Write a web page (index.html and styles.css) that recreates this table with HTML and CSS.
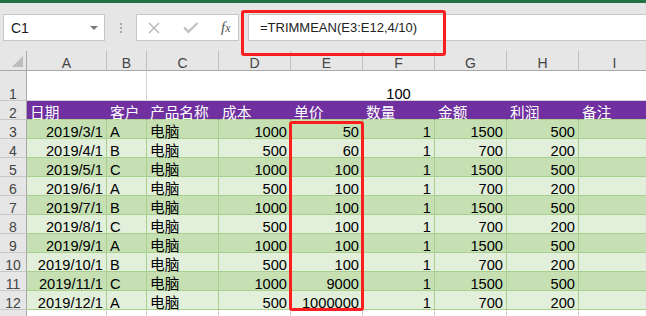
FILE: index.html
```html
<!DOCTYPE html>
<html>
<head>
<meta charset="utf-8">
<link rel="stylesheet" href="styles.css">
</head>
<body>
<div class="app">
  <div class="title-strip"></div>
  <div class="formula-bar">
    <div class="name-box"><span>C1</span><span class="caret"></span></div>
    <div class="grip"><i></i><i></i><i></i></div>
    <div class="fx-buttons">
      <svg class="ic-cancel" width="12" height="12" viewBox="0 0 12 12"><path d="M1 1L11 11M11 1L1 11" stroke="#b4b4b4" stroke-width="1.3" fill="none"/></svg>
      <svg class="ic-enter" width="16" height="12" viewBox="0 0 16 12"><path d="M1.2 5.6L5.4 9.8L14.6 1" stroke="#c2c2c2" stroke-width="2.4" fill="none"/></svg>
      <span class="fx">f<span class="fx-x">x</span></span>
    </div>
    <div class="formula-input">=TRIMMEAN(E3:E12,4/10)</div>
  </div>

  <div class="sheet">
    <div class="c ch corner"><span class="tri"></span></div>
    <div class="c ch">A</div><div class="c ch">B</div><div class="c ch">C</div><div class="c ch">D</div><div class="c ch">E</div><div class="c ch">F</div><div class="c ch">G</div><div class="c ch">H</div><div class="c ch">I</div>

    <div class="c rh">1</div>
    <div class="c span2"></div>
    <div class="c merged">100</div>

    <div class="c rh">2</div>
    <div class="c hd">日期</div><div class="c hd">客户</div><div class="c hd">产品名称</div><div class="c hd">成本</div><div class="c hd">单价</div><div class="c hd">数量</div><div class="c hd">金额</div><div class="c hd">利润</div><div class="c hd">备注</div>

    <div class="c rh">3</div>
    <div class="c dk r">2019/3/1</div><div class="c dk">A</div><div class="c dk">电脑</div><div class="c dk r">1000</div><div class="c dk r">50</div><div class="c dk r">1</div><div class="c dk r">1500</div><div class="c dk r">500</div><div class="c dk"></div>

    <div class="c rh">4</div>
    <div class="c lt r">2019/4/1</div><div class="c lt">B</div><div class="c lt">电脑</div><div class="c lt r">500</div><div class="c lt r">60</div><div class="c lt r">1</div><div class="c lt r">700</div><div class="c lt r">200</div><div class="c lt"></div>

    <div class="c rh">5</div>
    <div class="c dk r">2019/5/1</div><div class="c dk">C</div><div class="c dk">电脑</div><div class="c dk r">1000</div><div class="c dk r">100</div><div class="c dk r">1</div><div class="c dk r">1500</div><div class="c dk r">500</div><div class="c dk"></div>

    <div class="c rh">6</div>
    <div class="c lt r">2019/6/1</div><div class="c lt">A</div><div class="c lt">电脑</div><div class="c lt r">500</div><div class="c lt r">100</div><div class="c lt r">1</div><div class="c lt r">700</div><div class="c lt r">200</div><div class="c lt"></div>

    <div class="c rh">7</div>
    <div class="c dk r">2019/7/1</div><div class="c dk">B</div><div class="c dk">电脑</div><div class="c dk r">1000</div><div class="c dk r">100</div><div class="c dk r">1</div><div class="c dk r">1500</div><div class="c dk r">500</div><div class="c dk"></div>

    <div class="c rh">8</div>
    <div class="c lt r">2019/8/1</div><div class="c lt">C</div><div class="c lt">电脑</div><div class="c lt r">500</div><div class="c lt r">100</div><div class="c lt r">1</div><div class="c lt r">700</div><div class="c lt r">200</div><div class="c lt"></div>

    <div class="c rh">9</div>
    <div class="c dk r">2019/9/1</div><div class="c dk">A</div><div class="c dk">电脑</div><div class="c dk r">1000</div><div class="c dk r">100</div><div class="c dk r">1</div><div class="c dk r">1500</div><div class="c dk r">500</div><div class="c dk"></div>

    <div class="c rh">10</div>
    <div class="c lt r">2019/10/1</div><div class="c lt">B</div><div class="c lt">电脑</div><div class="c lt r">500</div><div class="c lt r">100</div><div class="c lt r">1</div><div class="c lt r">700</div><div class="c lt r">200</div><div class="c lt"></div>

    <div class="c rh">11</div>
    <div class="c dk r">2019/11/1</div><div class="c dk">C</div><div class="c dk">电脑</div><div class="c dk r">1000</div><div class="c dk r">9000</div><div class="c dk r">1</div><div class="c dk r">1500</div><div class="c dk r">500</div><div class="c dk"></div>

    <div class="c rh">12</div>
    <div class="c lt r">2019/12/1</div><div class="c lt">A</div><div class="c lt">电脑</div><div class="c lt r">500</div><div class="c lt r">1000000</div><div class="c lt r">1</div><div class="c lt r">700</div><div class="c lt r">200</div><div class="c lt"></div>

    <div class="c rh">13</div>
    <div class="c"></div><div class="c"></div><div class="c"></div><div class="c"></div><div class="c"></div><div class="c"></div><div class="c"></div><div class="c"></div><div class="c"></div>
  </div>

  <div class="callout callout-formula"></div>
  <div class="callout callout-range"></div>
</div>
</body>
</html>
```

FILE: styles.css
```css
* { box-sizing: border-box; }
html, body { margin: 0; padding: 0; }
body {
  width: 646px;
  height: 316px;
  overflow: hidden;
  background: #e6e6e6;
  font-family: "Liberation Sans", "Noto Sans CJK SC", sans-serif;
}
.app {
  position: relative;
  width: 646px;
  height: 316px;
  overflow: hidden;
}
.title-strip {
  height: 3px;
  background: #217346;
}
.formula-bar {
  display: flex;
  align-items: flex-start;
  height: 48px;
  padding-top: 11px;
}
.name-box {
  width: 102px;
  height: 27px;
  margin-left: 3px;
  background: #fff;
  border: 1px solid #c6c6c6;
  display: flex;
  align-items: center;
  justify-content: space-between;
  padding: 0 6px 0 7px;
  font-size: 14px;
  color: #222;
}
.caret {
  width: 0;
  height: 0;
  border-left: 4px solid transparent;
  border-right: 4px solid transparent;
  border-top: 4px solid #7a7a7a;
}
.grip {
  width: 31px;
  height: 27px;
  display: flex;
  flex-direction: column;
  align-items: center;
  justify-content: center;
  gap: 2px;
}
.grip i {
  display: block;
  width: 2px;
  height: 2px;
  background: #a8a8a8;
}
.fx-buttons {
  width: 103px;
  height: 27px;
  background: #fff;
  border: 1px solid #c6c6c6;
  display: flex;
  align-items: center;
}
.ic-cancel { margin-left: 11px; }
.ic-enter { margin-left: 23px; }
.fx {
  margin-left: 22px;
  font-family: "Liberation Serif", serif;
  font-style: italic;
  font-size: 15px;
  color: #555;
  line-height: 1;
}
.fx-x { font-size: 12px; }
.formula-input {
  flex: 1;
  height: 27px;
  margin-left: 9px;
  margin-right: -6px;
  background: #fff;
  border: 1px solid #c6c6c6;
  display: flex;
  align-items: center;
  padding-left: 11px;
  font-size: 13px;
  color: #222;
}

.sheet {
  display: grid;
  grid-template-columns: 27px 80px 40px repeat(7, 72px);
  grid-template-rows: 20px 30px repeat(12, 19px);
  width: 651px;
  background: #fff;
}
.c {
  border-right: 1px solid #d4d4d4;
  border-bottom: 1px solid #d4d4d4;
  display: flex;
  align-items: flex-end;
  padding: 0 3px;
  font-size: 14.67px;
  line-height: 12px;
  white-space: nowrap;
  color: #000;
}
.r { justify-content: flex-end; }
.ch {
  background: #e6e6e6;
  border-right-color: #c0c0c0;
  border-bottom-color: #a8a8a8;
  justify-content: center;
  padding-bottom: 1px;
  font-size: 14px;
  color: #444;
}
.corner {
  position: relative;
  border-right-color: #a8a8a8;
}
.tri {
  position: absolute;
  right: 3px;
  bottom: 3px;
  width: 0;
  height: 0;
  border-left: 11px solid transparent;
  border-bottom: 11px solid #bcbcbc;
}
.rh {
  background: #e6e6e6;
  border-right-color: #a8a8a8;
  border-bottom-color: #c8c8c8;
  justify-content: center;
  padding: 0;
  font-size: 14px;
  color: #444;
}
.span2 { grid-column: span 2; }
.merged {
  grid-column: span 7;
  justify-content: center;
}
.hd {
  background: #7030a0;
  border-right-color: #7030a0;
  border-bottom-color: #a9d08e;
  color: #fff;
}
.dk {
  background: #c6e0b4;
  border-color: #a9d08e;
}
.lt {
  background: #e2efda;
  border-color: #a9d08e;
}

.callout {
  position: absolute;
  border: 3px solid #fa1e1e;
  border-radius: 3px;
}
.callout-formula {
  left: 241px;
  top: 10px;
  width: 205px;
  height: 46px;
}
.callout-range {
  left: 289px;
  top: 121px;
  width: 75px;
  height: 190px;
}
```
